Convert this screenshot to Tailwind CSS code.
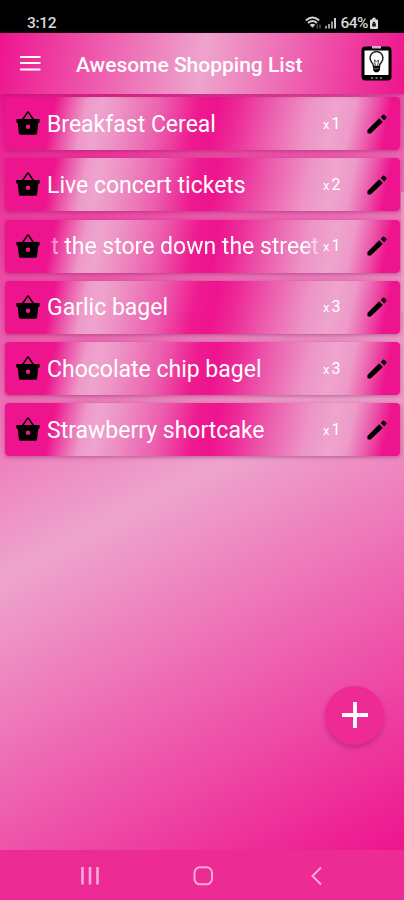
<!DOCTYPE html>
<html lang="en">
<head>
<meta charset="utf-8">
<title>Awesome Shopping List</title>
<script src="https://cdn.jsdelivr.net/npm/@tailwindcss/browser@4"></script>
</head>
<body class="w-[404px] h-[900px] overflow-hidden flex flex-col font-[Roboto,sans-serif] text-white bg-black">
<svg class="hidden">
  <symbol id="basket" viewBox="0 0 24 26">
    <path d="M6.300 10 11.300 2.600q.7-1 1.400 0L17.700 10" fill="none" stroke="#000" stroke-width="1.600"/>
    <path fill-rule="evenodd" d="M.8 9h22.400q.8 0 .7.900l-.3 2q-.1.800-.9.800h-.4l-1.200 10.500q-.2 1.500-1.500 1.500H4.400q-1.300 0-1.500-1.500L1.700 12.700H1.300q-.8 0-.9-.8L.1 9.900Q0 9 .8 9ZM12 14.400a2.300 2.300 0 1 0 0 4.600 2.300 2.300 0 0 0 0-4.600Z"/>
  </symbol>
  <symbol id="pencil" viewBox="0 0 20 20">
    <path d="M.4 15.900 12.200 4.300l3.700 3.700L4.300 19q-.6.600-1.400.600H1.400q-1 0-1-1ZM13.700 2.900 15.700.9q.9-.8 1.800 0l1.700 1.700q.8.900 0 1.700L17.200 6.400Z"/>
  </symbol>
</svg>

<div class="h-[33px] shrink-0 flex items-end justify-between pl-[27px] pr-[26px] pb-[1px] text-[#d8d8d8]">
  <span class="text-[15.500px] leading-[18px] font-medium tracking-[-0.300px]">3:12</span>
  <div class="flex items-center h-[18px]">
    <svg class="w-[17px] h-[14px]" viewBox="0 0 17 14" fill="none" stroke="#d0d0d0" stroke-width="1.900">
      <path d="M.8 4.500Q7.500 -1.500 14.200 4.500M3 7Q7.500 2.800 12 7"/><path d="M4.700 8.800Q7.500 6.800 10.300 8.800L7.500 11.800Z" fill="#d0d0d0" stroke="none"/><path d="M12.300 8.500v4M15 8.500v4" stroke="#666" stroke-width="1.200"/>
    </svg>
    <svg class="ml-[2px] w-[13px] h-[12px]" viewBox="0 0 13 12"><path fill="#999" d="M1 9h2v2.500H1ZM4 7h2v4.500H4ZM7 4.500h2v7H7Z"/><path fill="#ccc" d="M10 1h2v10.500h-2Z"/></svg>
    <span class="ml-[3px] text-[15.500px] leading-[18px] font-medium tracking-[-0.500px]">64%</span>
    <svg class="ml-[2px] w-[8px] h-[13px]" viewBox="0 0 8 13"><path fill="#ddd" d="M2.500.8h3v1.700H7q1 0 1 1V11q0 1-1 1H1q-1 0-1-1V3.500q0-1 1-1h1.500Z"/><path d="M2.200 6.300h3.600v3.200H2.200ZM3 6V5q1-1.200 2 0v1" fill="#111"/></svg>
  </div>
</div>

<header class="h-[61px] shrink-0 flex items-center bg-[linear-gradient(98.6deg,#ee148e_0%,#eea4cd_50%,#ee148e_100%)] relative z-10 shadow-[0_1px_4px_rgba(140,30,100,0.5)]">
  <svg class="ml-[20px] -mt-[2px] w-[21px] h-[16px]" viewBox="0 0 21 16" fill="none" stroke="#fff" stroke-width="2"><path d="M0 2h20.500M0 8h20.500M0 14.500h20.500"/></svg>
  <h1 class="ml-[35px] mt-[2px] w-[250px] whitespace-nowrap text-[21px] leading-[26px] font-medium">Awesome Shopping List</h1>
  <svg class="ml-auto mr-[12px] -mt-[1px] w-[31px] h-[35px]" viewBox="0 0 31 35">
    <rect x=".5" y=".5" width="30" height="34" rx="4"/>
    <rect x="3.500" y="4.500" width="24" height="24.500" fill="#fff"/>
    <path d="M11 0h9v2.500h-9Z" fill="#e7a9cc"/>
    <path d="M10 32h2M14.500 32h2M19 32h2" stroke="#ddd" stroke-width="1.200"/>
    <path d="M12.500 20.500q0-2.500-2-4.500a6.400 6.400 0 1 1 10 0q-2 2-2 4.500Z" fill="none" stroke="#222" stroke-width="1.500"/>
    <path d="M14.300 20l-.8-6 2 1.500 2-1.500L16.700 20" fill="none" stroke="#444" stroke-width="1"/>
    <path d="M12 20.500h7v3.500l-2 2.200h-3l-2-2.200Z"/><path d="M12 22.700h6" stroke="#bbb" stroke-width=".6"/>
  </svg>
</header>

<main class="relative h-[756px] shrink-0 bg-[linear-gradient(151.9deg,#ee148e_0%,#eea4cd_50%,#ee148e_100%)]">
  <ul id="list" class="flex flex-col gap-[8.300px] pt-[3px] pl-[5px] pr-[4px]"></ul>
  <div class="absolute right-0 top-[98px] w-[3px] h-[121px] bg-[#e8a0cb]/70"></div>
  <button class="absolute left-[325px] top-[592px] w-[59px] h-[59px] rounded-full bg-[#ee2a94] flex items-center justify-center shadow-[0_3px_5px_rgba(130,20,100,0.4)]" aria-label="Add item">
    <svg class="w-[26px] h-[26px] -mt-[2px]" viewBox="0 0 26 26" stroke="#fff" stroke-width="3.800"><path d="M13 0v26M0 13h26"/></svg>
  </button>
</main>

<nav class="h-[50px] shrink-0 bg-[#ec2b94]">
  <svg class="w-[404px] h-[50px]" viewBox="0 0 404 50" fill="none" stroke="#f9abd9" stroke-width="2">
    <path d="M82.500 17v17.500M90 17v17.500M97.500 17v17.500" stroke-width="2.600"/>
    <rect x="194.500" y="17.300" width="17.500" height="17" rx="5.500"/>
    <path d="M321 17.500 312.500 26l8.500 8.500"/>
  </svg>
</nav>

<template id="row">
  <li class="h-[53px] rounded-[4px] flex items-center pl-[11px] pr-[13px] shadow-[0_1px_4px_rgba(120,30,90,0.5)] bg-[linear-gradient(102deg,#ee148e_0%,#ee148e_12.500%,#ec5aac_16.500%,#ee9ac9_20.500%,#eea4cd_24%,#ed92c4_29%,#ec5fae_39%,#ee1a90_48%,#ee148e_53%,#ed2a98_58%,#ec5cad_66%,#ed96c6_76%,#eea4cd_82%,#ee9ac9_86.500%,#ec5cac_91%,#ee148e_95.500%)]">
    <svg class="w-[24px] h-[26px] shrink-0 -mt-px"><use href="#basket"/></svg>
    <div class="label ml-[7px] mt-[2px] w-[273px] h-[32px] shrink-0 overflow-hidden whitespace-nowrap text-[23px] leading-[32px]"></div>
    <div class="qty ml-[3px] w-[30px] shrink-0 whitespace-nowrap text-[16px] leading-[20px] mt-px"></div>
    <svg class="ml-auto w-[20px] h-[20px] shrink-0"><use href="#pencil"/></svg>
  </li>
</template>
<script>
const items = [["Breakfast Cereal",1],["Live concert tickets",2],["t the store down the street",1],["Garlic bagel",3],["Chocolate chip bagel",3],["Strawberry shortcake",1]];
const list = document.getElementById("list");
items.forEach(([name, n], i) => {
  const row = document.getElementById("row").content.cloneNode(true);
  const label = row.querySelector(".label");
  const text = document.createElement("span");
  text.textContent = name;
  if (i === 2) {
    text.className = "ml-[4px]";
    label.className += " [mask-image:linear-gradient(90deg,transparent_0,#000_14px,#000_256px,transparent_282px)]";
  }
  label.append(text);
  row.querySelector(".qty").innerHTML = '<span class="text-[13px]">x</span><span class="ml-[2px]">' + n + '</span>';
  list.append(row);
});
</script>
</body>
</html>
